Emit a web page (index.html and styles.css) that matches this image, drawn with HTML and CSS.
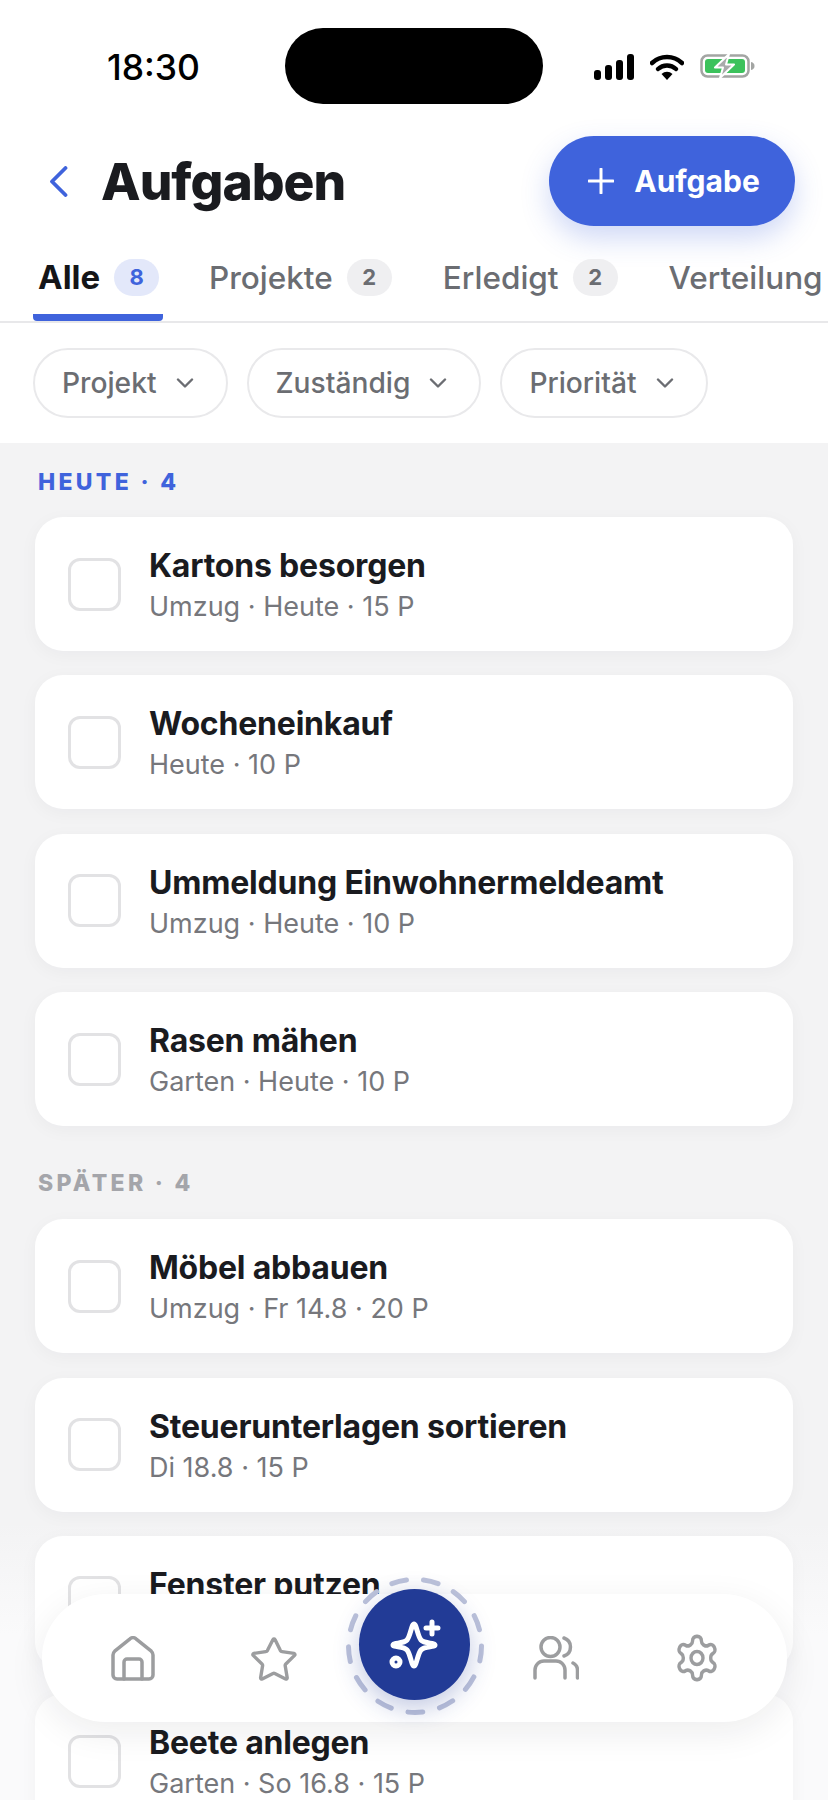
FILE: index.html
```html
<!DOCTYPE html>
<html lang="de">

<head>
  <meta charset="utf-8" />
  <meta name="viewport" content="width=device-width, initial-scale=1" />
  <title>Aufgaben</title>
  <link rel="stylesheet" href="styles.css">
</head>

<body>
  <div class="screen">

    <div class="status_bar">
      <span class="status_time">18:30</span>
      <div class="island"></div>
      <div class="status_icons">
        <svg width="40" height="26" viewBox="0 0 40 26">
          <rect x="0" y="16" width="7" height="10" rx="3" fill="#000" />
          <rect x="11" y="11" width="7" height="15" rx="3" fill="#000" />
          <rect x="22" y="6" width="7" height="20" rx="3" fill="#000" />
          <rect x="33" y="0" width="7" height="26" rx="3" fill="#000" />
        </svg>
        <svg width="34" height="26" viewBox="0 0 34 26">
          <path d="M2 9a22 22 0 0 1 30 0" fill="none" stroke="#000" stroke-width="4.500" stroke-linecap="round" />
          <path d="M8 15a13 13 0 0 1 18 0" fill="none" stroke="#000" stroke-width="4.500" stroke-linecap="round" />
          <path d="M11.500 20a8 8 0 0 1 11 0L17 26z" fill="#000" />
        </svg>
        <svg width="55" height="24" viewBox="0 0 55 24">
          <rect x="1.500" y="1.500" width="47" height="21" rx="6" fill="none" stroke="#a3a5a3" stroke-width="2.500" />
          <rect x="5" y="5" width="40" height="14" rx="3" fill="#3cc25c" />
          <path d="M51 8c2.500 .5 3.500 2 3.500 4s-1 3.500-3.500 4z" fill="#a3a5a3" />
          <path d="M29 0 15 13.500h8L20 24l14-13.500h-8z" fill="#a9abab" stroke="#fff" stroke-width="2" stroke-linejoin="round" />
        </svg>
      </div>
    </div>

    <div class="page_head">
      <div class="head_left">
        <svg class="back_icon" width="19" height="31" viewBox="0 0 19 31">
          <path d="M16.500 2 3 15.500 16.500 29" fill="none" stroke="#3f63dc" stroke-width="3.800" stroke-linecap="round" stroke-linejoin="round" />
        </svg>
        <h1 class="page_title">Aufgaben</h1>
      </div>
      <button type="button" class="add_btn">
        <svg width="26" height="26" viewBox="0 0 26 26">
          <path d="M13 1v24M1 13h24" stroke="#fff" stroke-width="3" stroke-linecap="round" />
        </svg>
        Aufgabe
      </button>
    </div>

    <div class="tabs">
      <div class="tab tab_active">Alle <span class="tab_count count_active">8</span></div>
      <div class="tab">Projekte <span class="tab_count">2</span></div>
      <div class="tab">Erledigt <span class="tab_count">2</span></div>
      <div class="tab">Verteilung</div>
    </div>

    <div class="filters">
      <div class="chip">Projekt
        <svg class="chip_arrow" width="18" height="10" viewBox="0 0 18 10"><path d="M2 1.500l7 7 7-7" fill="none" stroke="#6b6d72" stroke-width="2.400" stroke-linecap="round" stroke-linejoin="round" /></svg>
      </div>
      <div class="chip">Zuständig
        <svg class="chip_arrow" width="18" height="10" viewBox="0 0 18 10"><path d="M2 1.500l7 7 7-7" fill="none" stroke="#6b6d72" stroke-width="2.400" stroke-linecap="round" stroke-linejoin="round" /></svg>
      </div>
      <div class="chip">Priorität
        <svg class="chip_arrow" width="18" height="10" viewBox="0 0 18 10"><path d="M2 1.500l7 7 7-7" fill="none" stroke="#6b6d72" stroke-width="2.400" stroke-linecap="round" stroke-linejoin="round" /></svg>
      </div>
    </div>

    <div class="task_area">
      <div class="group_label label_today">HEUTE · 4</div>
      <div class="task_list">
        <div class="task"><div class="check"></div><div class="task_text"><div class="task_name">Kartons besorgen</div><div class="task_meta">Umzug · Heute · 15 P</div></div></div>
        <div class="task"><div class="check"></div><div class="task_text"><div class="task_name">Wocheneinkauf</div><div class="task_meta">Heute · 10 P</div></div></div>
        <div class="task"><div class="check"></div><div class="task_text"><div class="task_name">Ummeldung Einwohnermeldeamt</div><div class="task_meta">Umzug · Heute · 10 P</div></div></div>
        <div class="task"><div class="check"></div><div class="task_text"><div class="task_name">Rasen mähen</div><div class="task_meta">Garten · Heute · 10 P</div></div></div>
      </div>

      <div class="group_label label_later">SPÄTER · 4</div>
      <div class="task_list">
        <div class="task"><div class="check"></div><div class="task_text"><div class="task_name">Möbel abbauen</div><div class="task_meta">Umzug · Fr 14.8 · 20 P</div></div></div>
        <div class="task"><div class="check"></div><div class="task_text"><div class="task_name">Steuerunterlagen sortieren</div><div class="task_meta">Di 18.8 · 15 P</div></div></div>
        <div class="task"><div class="check"></div><div class="task_text"><div class="task_name">Fenster putzen</div><div class="task_meta">&nbsp;</div></div></div>
        <div class="task"><div class="check"></div><div class="task_text"><div class="task_name">Beete anlegen</div><div class="task_meta">Garten · So 16.8 · 15 P</div></div></div>
      </div>
    </div>

    <div class="nav">
      <div class="nav_item">
        <svg width="44" height="45" viewBox="0 0 44 45" class="nav_icon">
          <path d="M2 19c0-1.500 .6-2.800 1.700-3.800L19 2.800a4.500 4.500 0 0 1 6 0l15.300 12.400c1.100 1 1.700 2.300 1.700 3.800v20a4 4 0 0 1-4 4H6a4 4 0 0 1-4-4z" />
          <path d="M13 43V26a3 3 0 0 1 3-3h12a3 3 0 0 1 3 3v17" />
        </svg>
      </div>
      <div class="nav_item">
        <svg width="50" height="48" viewBox="0 0 24 24" class="nav_icon star_icon">
          <path d="M11.500 2.800a.6.6 0 0 1 1 0l2.700 5.500a1 1 0 0 0 .8.500l6 .9a.6.6 0 0 1 .3 1l-4.400 4.300a1 1 0 0 0-.3.900l1 6a.6.6 0 0 1-.8.600l-5.400-2.800a1 1 0 0 0-.9 0l-5.400 2.800a.6.6 0 0 1-.8-.6l1-6a1 1 0 0 0-.3-.9L1.600 10.700a.6.6 0 0 1 .3-1l6-.9a1 1 0 0 0 .8-.5z" />
        </svg>
      </div>
      <div class="nav_item">
        <svg class="ai_ring" width="138" height="138" viewBox="0 0 138 138">
          <circle cx="69" cy="69" r="66.500" fill="none" stroke="#bcc2da" stroke-width="5" stroke-linecap="round" stroke-dasharray="15 17.140" />
        </svg>
        <div class="ai_btn">
          <svg width="60" height="60" viewBox="0 0 60 60" fill="none" stroke="#fff" stroke-width="5" stroke-linecap="round" stroke-linejoin="round">
            <path d="M30 9c2.500 0 3.500 12 7 16s14 2.500 14 5-10.500 1-14 5-4.500 16-7 16-3.500-12-7-16-14-2.500-14-5 10.500-1 14-5 4.500-16 7-16z" />
            <path d="M48 7v12M42 13h12" />
            <circle cx="12" cy="47" r="4" />
          </svg>
        </div>
      </div>
      <div class="nav_item">
        <svg width="46" height="44" viewBox="0 0 46 44" class="nav_icon">
          <ellipse cx="17.500" cy="11" rx="9.500" ry="9.500" />
          <path d="M2 42v-8a9 9 0 0 1 9-9h12a9 9 0 0 1 9 9v8" />
          <path d="M31 2a9.500 9.500 0 0 1 0 18" />
          <path d="M40 27a8 8 0 0 1 4.500 7v8" />
        </svg>
      </div>
      <div class="nav_item">
        <svg width="48" height="52" viewBox="0 0 24 24" preserveAspectRatio="none" class="nav_icon star_icon">
          <path d="M12.220 2h-.44a2 2 0 0 0-2 2v.18a2 2 0 0 1-1 1.730l-.43.25a2 2 0 0 1-2 0l-.15-.08a2 2 0 0 0-2.730.73l-.22.38a2 2 0 0 0 .73 2.730l.15.1a2 2 0 0 1 1 1.720v.51a2 2 0 0 1-1 1.740l-.15.09a2 2 0 0 0-.73 2.730l.22.38a2 2 0 0 0 2.730.73l.15-.08a2 2 0 0 1 2 0l.43.25a2 2 0 0 1 1 1.730V20a2 2 0 0 0 2 2h.44a2 2 0 0 0 2-2v-.18a2 2 0 0 1 1-1.730l.43-.25a2 2 0 0 1 2 0l.15.08a2 2 0 0 0 2.730-.73l.22-.39a2 2 0 0 0-.73-2.730l-.15-.08a2 2 0 0 1-1-1.740v-.5a2 2 0 0 1 1-1.740l.15-.09a2 2 0 0 0 .73-2.730l-.22-.38a2 2 0 0 0-2.730-.73l-.15.08a2 2 0 0 1-2 0l-.43-.25a2 2 0 0 1-1-1.730V4a2 2 0 0 0-2-2z" />
          <circle cx="12" cy="12" r="3" />
        </svg>
      </div>
    </div>

  </div>
</body>

</html>
```

FILE: styles.css
```css
* {
  box-sizing: border-box;
}

body {
  margin: 0;
  background: #fff;
  font-family: Inter, "Liberation Sans", sans-serif;
}

.screen {
  position: relative;
  width: 828px;
  height: 1800px;
  overflow: hidden;
  display: flex;
  flex-direction: column;
}

.status_bar {
  height: 136px;
  padding: 28px 0 0 107px;
  display: flex;
  align-items: flex-start;
  flex-shrink: 0;
}

.status_time {
  width: 178px;
  margin-top: 20px;
  font-size: 35.500px;
  line-height: 40px;
  font-weight: 500;
  color: #000;
}

.island {
  width: 258px;
  height: 76px;
  border-radius: 38px;
  background: #000;
}

.status_icons {
  margin: 26px 0 0 51px;
  display: flex;
  align-items: flex-start;
  gap: 16px;
}

.page_head {
  height: 90px;
  padding: 0 33px 0 49px;
  display: flex;
  align-items: center;
  justify-content: space-between;
  flex-shrink: 0;
}

.head_left {
  display: flex;
  align-items: center;
  gap: 33px;
}

.back_icon {
  flex-shrink: 0;
}

.page_title {
  margin: 0;
  font-size: 51.500px;
  font-weight: 800;
  letter-spacing: -1px;
  color: #1a1b1f;
}

.add_btn {
  width: 246px;
  height: 90px;
  padding: 0 0 0 4px;
  border: none;
  border-radius: 45px;
  background: #3f63dc;
  color: #fff;
  font-family: inherit;
  font-size: 30px;
  font-weight: 700;
  display: flex;
  align-items: center;
  justify-content: center;
  gap: 20px;
  box-shadow: 0 12px 28px rgba(63, 99, 220, 0.25);
}

.tabs {
  height: 97px;
  padding: 0 0 0 33px;
  border-bottom: 2px solid #e8e8ea;
  display: flex;
  gap: 41px;
  flex-shrink: 0;
  white-space: nowrap;
}

.tab {
  height: 95px;
  padding: 33px 5px 0 5px;
  display: flex;
  align-items: flex-start;
  gap: 14px;
  font-size: 31.500px;
  line-height: 37px;
  font-weight: 500;
  color: #6b6d72;
}

.tab_active {
  width: 130px;
  border-bottom: 7px solid #3f63dc;
  border-radius: 0 0 4px 4px;
  font-size: 33px;
  color: #141518;
  font-weight: 700;
}

.tab_count {
  width: 45px;
  height: 37px;
  flex-shrink: 0;
  border-radius: 19px;
  background: #efeff1;
  font-size: 22px;
  font-weight: 700;
  line-height: 37px;
  text-align: center;
}

.count_active {
  background: #e3e8fa;
  color: #3f63dc;
}

.filters {
  height: 120px;
  padding: 25px 33px 0;
  display: flex;
  gap: 19px;
  flex-shrink: 0;
}

.chip {
  height: 70px;
  padding: 0 32px 0 27px;
  border: 2px solid #e9e9eb;
  border-radius: 35px;
  display: flex;
  align-items: center;
  gap: 19px;
  font-size: 28.200px;
  font-weight: 500;
  color: #6b6d72;
}

.task_area {
  flex: 1;
  background: linear-gradient(to bottom, #f3f3f4 78%, #fafafb 86%);
  padding: 0 35px;
}

.group_label {
  height: 74px;
  padding: 24px 0 0 3px;
  font-size: 23px;
  line-height: 30px;
  font-weight: 800;
  letter-spacing: 3.300px;
}

.label_today {
  color: #3f63dc;
}

.label_later {
  height: 93px;
  padding-top: 42px;
  color: #a4a5aa;
}

.task_list {
  display: flex;
  flex-direction: column;
  gap: 24.400px;
}

.task {
  height: 134px;
  flex-shrink: 0;
  padding: 0 33px;
  border-radius: 28px;
  background: #fff;
  display: flex;
  align-items: center;
  gap: 28px;
  box-shadow: 0 4px 18px rgba(20, 20, 40, 0.04);
}

.check {
  width: 53px;
  height: 53px;
  flex-shrink: 0;
  border: 3.500px solid #e2e2e4;
  border-radius: 12px;
}

.task_text {
  padding-top: 3px;
}

.task_name {
  font-size: 32px;
  line-height: 40px;
  font-weight: 700;
  letter-spacing: -0.200px;
  color: #1a1b1f;
}

.task_meta {
  font-size: 27px;
  line-height: 36px;
  margin-top: 3px;
  color: #76777c;
}

.nav {
  position: absolute;
  left: 42px;
  top: 1594px;
  width: 745px;
  height: 128px;
  padding: 0 20px;
  border-radius: 64px;
  background: #fff;
  display: grid;
  grid-template-columns: repeat(5, 141px);
  align-items: center;
  justify-items: center;
  box-shadow: 0 10px 36px rgba(20, 20, 40, 0.08);
}

.nav_item {
  position: relative;
  display: flex;
  align-items: center;
  justify-content: center;
}

.nav_icon {
  fill: none;
  stroke: #9c9d9f;
  stroke-width: 3.500;
  stroke-linecap: round;
  stroke-linejoin: round;
}

.star_icon {
  stroke-width: 1.700;
}

.ai_btn {
  position: absolute;
  top: -69px;
  left: -56px;
  width: 111px;
  height: 111px;
  border-radius: 50%;
  background: #223b96;
  display: flex;
  align-items: center;
  justify-content: center;
  box-shadow: 0 8px 26px rgba(34, 59, 150, 0.28);
}

.ai_ring {
  position: absolute;
  top: -81px;
  left: -69px;
}
```
